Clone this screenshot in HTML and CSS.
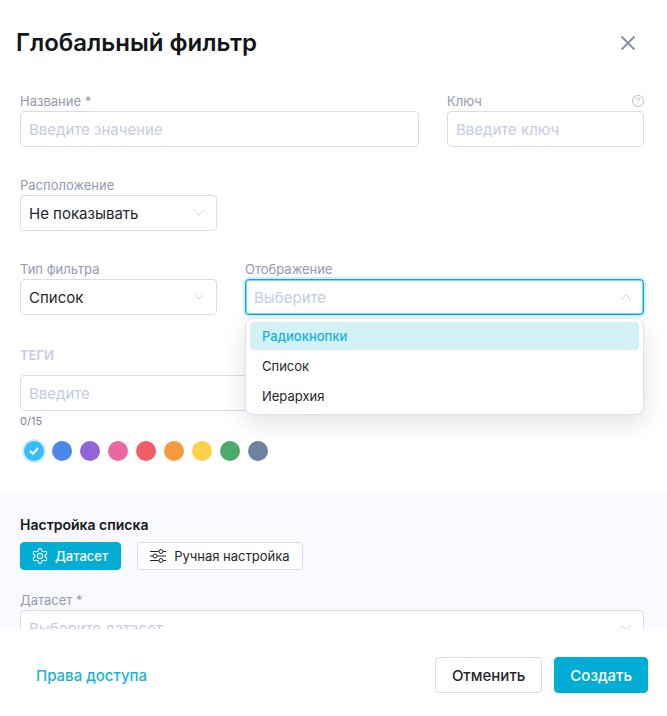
FILE: index.html
```html
<!DOCTYPE html>
<html lang="ru">
<head>
  <meta charset="UTF-8">
  <meta name="viewport" content="width=device-width, initial-scale=1.0">
  <title>Глобальный фильтр</title>
  <link rel="stylesheet" href="styles.css">
</head>
<body>

<div class="modal">
  <div class="modal-header">
    <h2>Глобальный фильтр</h2>
    <svg class="close-icon" width="16" height="16" viewBox="0 0 16 16"><path d="M1.500 1.500l13 13M14.500 1.500l-13 13"/></svg>
  </div>

  <div class="modal-body">
    <div class="form-part">
      <div class="row row-wide-left">
        <div class="field">
          <label class="field-label">Название *</label>
          <div class="control placeholder">Введите значение</div>
        </div>
        <div class="field">
          <label class="field-label label-between">Ключ
            <svg class="help-icon" width="12" height="12" viewBox="0 0 12 12"><circle cx="6" cy="6" r="5.500"/><path d="M4.400 4.700c0-2.100 3.300-2.100 3.300-.1 0 1.200-1.700 1.300-1.700 2.500"/><path d="M6 8.300v.9"/></svg>
          </label>
          <div class="control placeholder">Введите ключ</div>
        </div>
      </div>

      <div class="row row-narrow">
        <div class="field">
          <label class="field-label">Расположение</label>
          <div class="control">Не показывать
            <svg class="chevron" width="10" height="6" viewBox="0 0 10 6"><path d="M.5.5L5 5 9.500.5"/></svg>
          </div>
        </div>
      </div>

      <div class="row row-wide-right">
        <div class="field">
          <label class="field-label">Тип фильтра</label>
          <div class="control">Список
            <svg class="chevron" width="10" height="6" viewBox="0 0 10 6"><path d="M.5.5L5 5 9.500.5"/></svg>
          </div>
        </div>
        <div class="field">
          <label class="field-label">Отображение</label>
          <div class="control control-open placeholder">Выберите
            <svg class="chevron" width="10" height="6" viewBox="0 0 10 6"><path d="M.5 5.500L5 1l4.500 4.500"/></svg>
          </div>
          <div class="dropdown">
            <div class="dropdown-item active">Радиокнопки</div>
            <div class="dropdown-item">Список</div>
            <div class="dropdown-item">Иерархия</div>
          </div>
        </div>
      </div>

      <div class="tags">
        <div class="tags-title">ТЕГИ</div>
        <div class="control control-tags placeholder">Введите</div>
        <div class="tags-count">0/15</div>
        <div class="colors">
          <span class="color selected">
            <svg width="10" height="8" viewBox="0 0 10 8"><path d="M1 4l3 2.800L9 1"/></svg>
          </span>
          <span class="color c-blue"></span>
          <span class="color c-purple"></span>
          <span class="color c-pink"></span>
          <span class="color c-red"></span>
          <span class="color c-orange"></span>
          <span class="color c-yellow"></span>
          <span class="color c-green"></span>
          <span class="color c-grey"></span>
        </div>
      </div>
    </div>

    <div class="list-settings">
      <div class="section-title">Настройка списка</div>
      <div class="tabs">
        <button class="tab tab-active">
          <svg width="18" height="18" viewBox="0 0 24 24"><path d="M12.220 2h-.44a2 2 0 0 0-2 2v.18a2 2 0 0 1-1 1.730l-.43.25a2 2 0 0 1-2 0l-.15-.08a2 2 0 0 0-2.730.73l-.22.38a2 2 0 0 0 .73 2.730l.15.1a2 2 0 0 1 1 1.720v.51a2 2 0 0 1-1 1.740l-.15.09a2 2 0 0 0-.73 2.730l.22.38a2 2 0 0 0 2.730.73l.15-.08a2 2 0 0 1 2 0l.43.25a2 2 0 0 1 1 1.730V20a2 2 0 0 0 2 2h.44a2 2 0 0 0 2-2v-.18a2 2 0 0 1 1-1.730l.43-.25a2 2 0 0 1 2 0l.15.08a2 2 0 0 0 2.730-.73l.22-.39a2 2 0 0 0-.73-2.730l-.15-.08a2 2 0 0 1-1-1.740v-.5a2 2 0 0 1 1-1.740l.15-.09a2 2 0 0 0 .73-2.730l-.22-.38a2 2 0 0 0-2.730-.73l-.15.08a2 2 0 0 1-2 0l-.43-.25a2 2 0 0 1-1-1.730V4a2 2 0 0 0-2-2z"/><circle cx="12" cy="12" r="3.500"/></svg>
          Датасет
        </button>
        <button class="tab">
          <svg width="16" height="14" viewBox="0 0 16 14"><path d="M0 2.500h9M13 2.500h3M0 7h3M7 7h9M0 11.500h9M13 11.500h3"/><circle cx="11" cy="2.500" r="2"/><circle cx="5" cy="7" r="2"/><circle cx="11" cy="11.500" r="2"/></svg>
          Ручная настройка
        </button>
      </div>
      <div class="field">
        <label class="field-label">Датасет *</label>
        <div class="control placeholder">Выберите датасет
          <svg class="chevron" width="10" height="6" viewBox="0 0 10 6"><path d="M.5.5L5 5 9.500.5"/></svg>
        </div>
      </div>
    </div>
  </div>

  <div class="modal-footer">
    <a class="access-link">Права доступа</a>
    <div class="footer-buttons">
      <button class="btn btn-cancel">Отменить</button>
      <button class="btn btn-create">Создать</button>
    </div>
  </div>
</div>

</body>
</html>
```

FILE: styles.css
```css
* {
  box-sizing: border-box;
}
body {
  font-family: 'Inter', sans-serif;
  background-color: #fff;
  margin: 0;
  color: #24262e;
}
.modal {
  display: flex;
  flex-direction: column;
  height: 716px;
  overflow: hidden;
}
.modal-header {
  display: flex;
  justify-content: space-between;
  align-items: center;
  height: 86px;
  padding: 0 31px 0 16px;
  flex-shrink: 0;
}
.modal-header h2 {
  margin: 0;
  font-size: 24px;
  font-weight: 600;
  line-height: 32px;
  color: #14151a;
}
.close-icon path {
  fill: none;
  stroke: #8a90aa;
  stroke-width: 2;
}
.modal-body {
  height: 543px;
  overflow: hidden;
  flex-shrink: 0;
}
.form-part {
  padding: 7px 23px 32px 20px;
}
.row {
  display: grid;
  gap: 28px;
  margin-bottom: 30px;
}
.row-wide-left {
  grid-template-columns: 399px 197px;
}
.row-wide-right {
  grid-template-columns: 197px 399px;
}
.row-narrow {
  grid-template-columns: 197px;
}
.field {
  position: relative;
}
.field-label {
  display: block;
  height: 18px;
  font-size: 13px;
  line-height: 16px;
  color: #9499b3;
}
.label-between {
  display: flex;
  justify-content: space-between;
  align-items: flex-start;
}
.help-icon {
  margin-top: 2px;
}
.help-icon circle,
.help-icon path {
  fill: none;
  stroke: #b4b9cf;
}
.control {
  display: flex;
  justify-content: space-between;
  align-items: center;
  height: 36px;
  padding: 0 12px 0 8px;
  background-color: #fff;
  border: 1px solid #d7dbec;
  border-radius: 4px;
  font-size: 15px;
  color: #24262e;
}
.control.placeholder {
  color: #c6cbe4;
}
.control-open {
  border-color: #00add4;
  box-shadow: 0 0 0 2px #d3f1f7, inset 0 0 0 0.5px #00add4;
}
.chevron path {
  fill: none;
  stroke: #ccd0e6;
}
.dropdown {
  position: absolute;
  z-index: 5;
  top: 57px;
  left: 0;
  right: 0;
  height: 97px;
  padding: 3px 4px;
  background-color: #fff;
  border: 1px solid #dcdfee;
  border-radius: 8px;
  box-shadow: 0 8px 24px rgba(40, 46, 80, 0.14);
}
.dropdown-item {
  height: 30px;
  padding-left: 12px;
  font-size: 13px;
  line-height: 30px;
  color: #24262e;
}
.dropdown-item.active {
  height: 28px;
  margin-bottom: 1px;
  line-height: 28px;
  background-color: #d3f1f7;
  border-radius: 4px;
  color: #16b3d8;
  font-weight: 500;
}
.tags-title {
  height: 30px;
  font-size: 13px;
  font-weight: 600;
  line-height: 20px;
  color: #c6cbe4;
}
.control-tags {
  width: 399px;
}
.tags-count {
  margin-top: 3px;
  font-size: 11px;
  line-height: 14px;
  color: #7d8299;
}
.colors {
  display: flex;
  gap: 8px;
  margin-top: 13px;
  padding-left: 4px;
}
.color {
  display: flex;
  justify-content: center;
  align-items: center;
  width: 20px;
  height: 20px;
  border-radius: 50%;
}
.color.selected {
  background-color: #37bdfb;
  box-shadow: 0 0 0 2px #cdeefc;
}
.color.selected path {
  fill: none;
  stroke: #fff;
  stroke-width: 2;
}
.c-blue { background-color: #4c88ec; }
.c-purple { background-color: #9263d9; }
.c-pink { background-color: #e968a3; }
.c-red { background-color: #f15c66; }
.c-orange { background-color: #f49b3b; }
.c-yellow { background-color: #ffd04a; }
.c-green { background-color: #4caa6c; }
.c-grey { background-color: #6f81a0; }
.list-settings {
  padding: 22px 23px 0 20px;
  height: 200px;
  background-color: #f9faff;
}
.section-title {
  font-size: 14px;
  font-weight: 600;
  line-height: 20px;
  color: #14151a;
}
.tabs {
  display: flex;
  gap: 16px;
  margin: 7px 0 22px;
}
.tab {
  display: flex;
  align-items: center;
  gap: 8px;
  height: 28px;
  padding: 0 12px;
  background-color: #fff;
  border: 1px solid #d7dbec;
  border-radius: 4px;
  font-family: inherit;
  font-size: 13px;
  font-weight: 400;
  color: #24262e;
}
.tab svg * {
  fill: none;
  stroke: #24262e;
}
.tab-active {
  gap: 6px;
  padding: 0 12px 0 10px;
  background-color: #00add4;
  border-color: #00add4;
  color: #fff;
  font-weight: 500;
}
.tab-active svg * {
  stroke: #fff;
  stroke-width: 1.4;
}
.modal-footer {
  display: flex;
  justify-content: space-between;
  align-items: center;
  flex: 1;
  padding: 5px 19px 0 36px;
  background-color: #fff;
}
.access-link {
  font-size: 15px;
  font-weight: 500;
  color: #16b3d8;
  cursor: pointer;
}
.footer-buttons {
  display: flex;
  gap: 12px;
}
.btn {
  height: 36px;
  padding: 0 16px;
  border-radius: 4px;
  font-family: inherit;
  font-size: 15px;
  cursor: pointer;
}
.btn-cancel {
  background-color: #fff;
  border: 1px solid #d7dbec;
  color: #24262e;
  font-weight: 500;
}
.btn-create {
  padding: 0 15px;
  background-color: #00add4;
  border: 1px solid #00add4;
  color: #fff;
  font-weight: 500;
}
```
